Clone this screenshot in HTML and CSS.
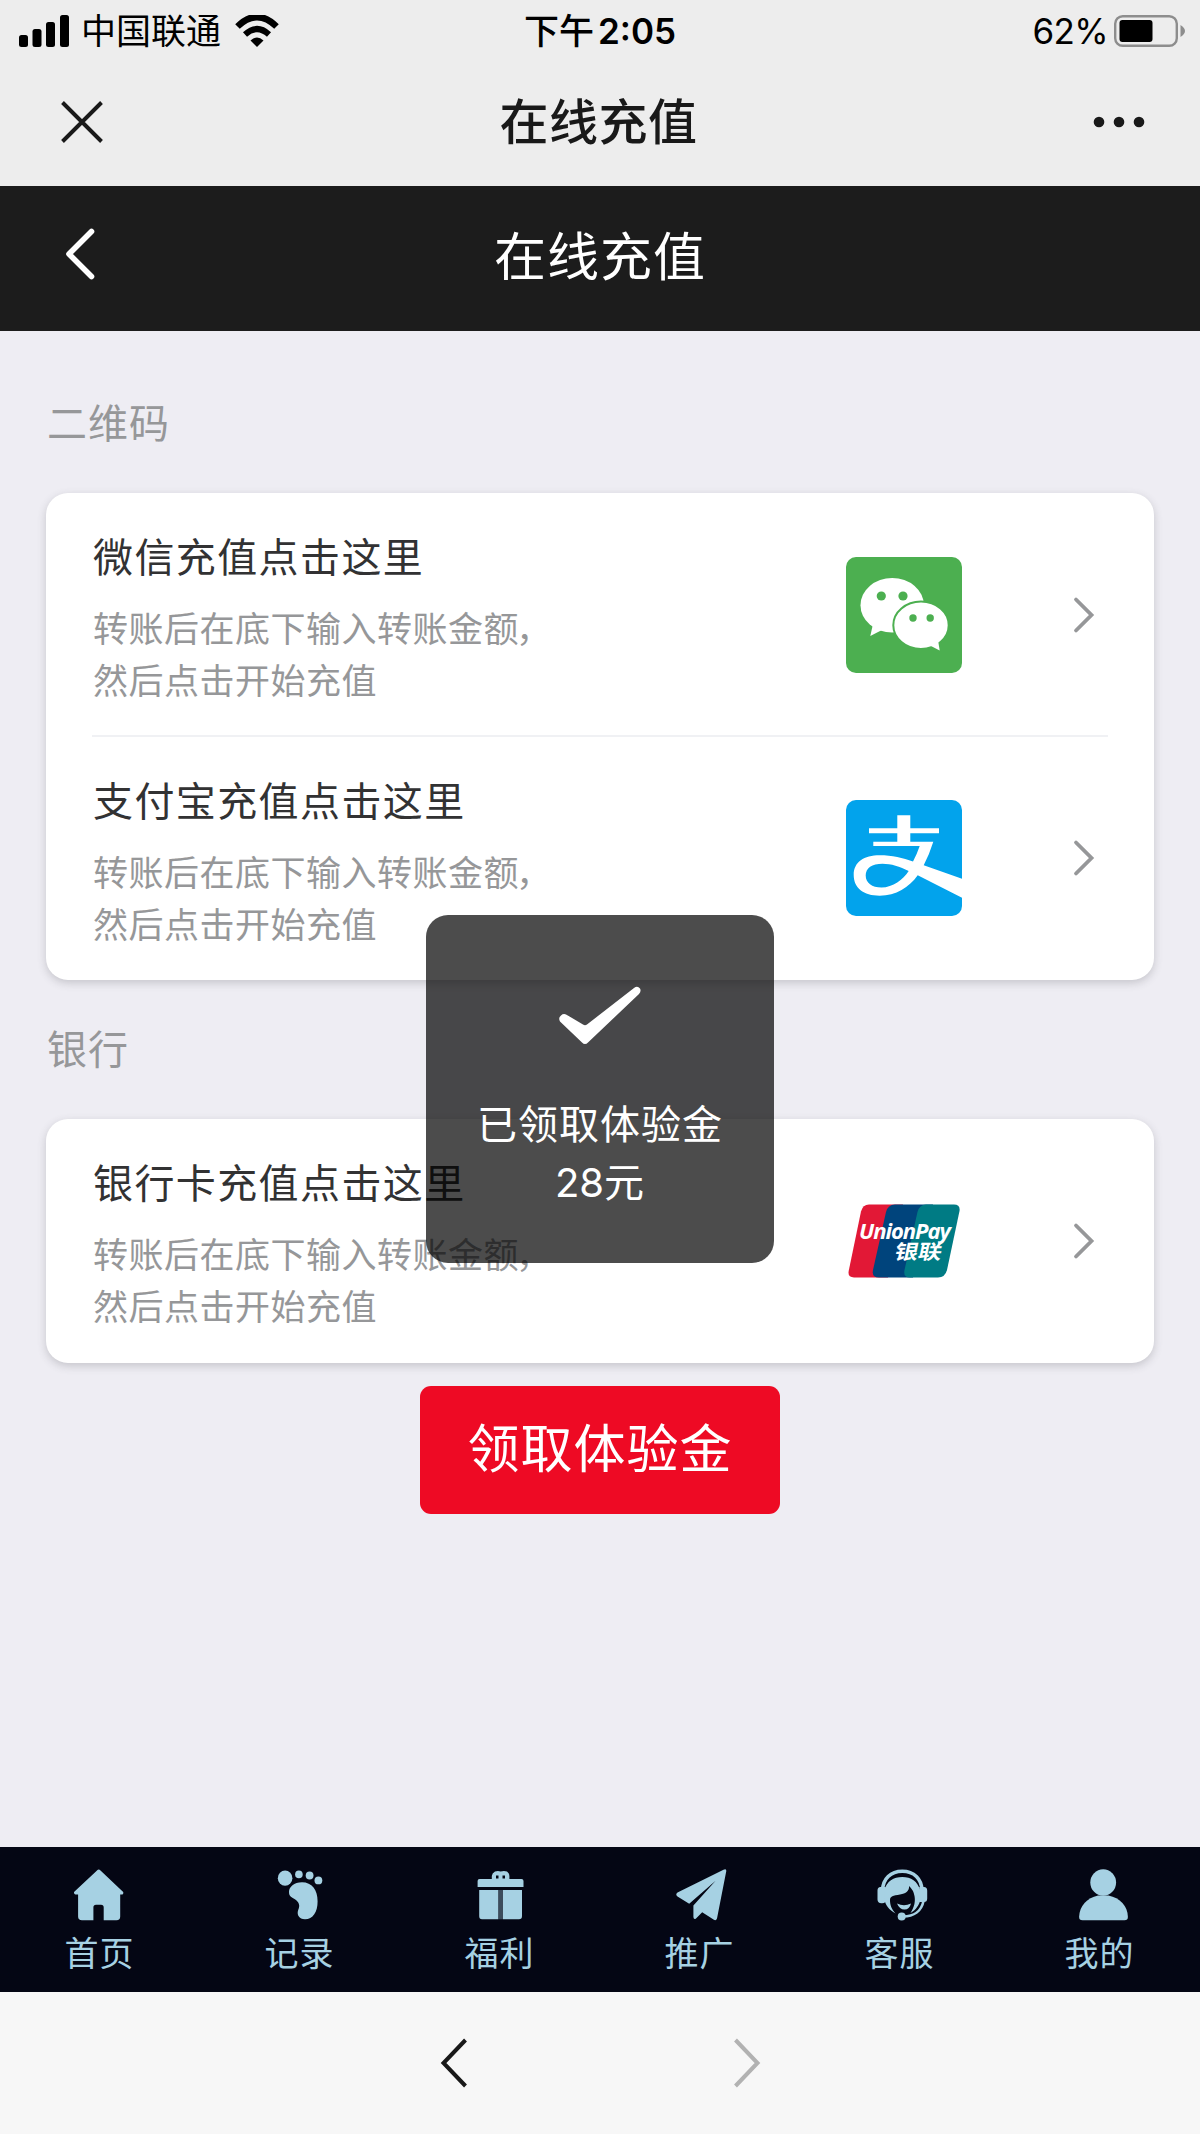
FILE: index.html
```html
<!DOCTYPE html>
<html lang="zh-CN">
<head>
<meta charset="utf-8">
<title>在线充值</title>
<link rel="stylesheet" href="styles.css">
</head>
<body>
<div class="screen">
  <div class="status">
    <div class="status-left">
      <svg class="signal" width="50" height="32" viewBox="0 0 50 32"><rect x="0" y="20" width="9" height="12" rx="2.5"/><rect x="13.5" y="14" width="9" height="18" rx="2.5"/><rect x="27" y="7" width="9" height="25" rx="2.5"/><rect x="41" y="0" width="9" height="32" rx="2.5"/></svg>
      <span class="carrier">中国联通</span>
      <svg class="wifi" width="44" height="32" viewBox="0 0 44 32"><path d="M2.5 11.5Q22-7.5 41.5 11.5" fill="none" stroke="#000" stroke-width="6.5"/><path d="M10 19.5Q22 8.5 34 19.5" fill="none" stroke="#000" stroke-width="6"/><path d="M15.5 25.5Q22 19.5 28.500 25.5L22 32Z"/></svg>
    </div>
    <div class="time">下午<span class="clock">2:05</span></div>
    <div class="status-right">
      <span class="percent">62%</span>
      <svg width="72" height="32" viewBox="0 0 72 32"><rect x="1.200" y="1.200" width="61.600" height="29.600" rx="7.500" fill="none" stroke="#8d8d8d" stroke-width="2.400"/><rect x="5.500" y="5" width="33" height="22" rx="3"/><path d="M66.500 10Q71 13 71 16T66.500 22Z" fill="#8d8d8d"/></svg>
    </div>
  </div>
  <header class="browser-bar">
    <svg class="close" width="44" height="44" viewBox="0 0 44 44"><path d="M2.500 2.500 41.500 41.500M41.500 2.500 2.500 41.500" fill="none" stroke="#191919" stroke-width="3.900"/></svg>
    <h1 class="browser-title">在线充值</h1>
    <svg class="more" width="52" height="12" viewBox="0 0 52 12"><circle cx="6" cy="6" r="5.300"/><circle cx="26" cy="6" r="5.300"/><circle cx="46" cy="6" r="5.300"/></svg>
  </header>
  <nav class="page-bar">
    <svg class="back" width="30" height="52" viewBox="0 0 30 52"><path d="M26.500 3.500 4 26 26.500 48.500" fill="none" stroke="#fff" stroke-width="5.600" stroke-linecap="round" stroke-linejoin="round"/></svg>
    <h2 class="page-title">在线充值</h2>
  </nav>

  <main class="content">
    <h3 class="section">二维码</h3>
    <div class="card">
      <div class="row divided">
        <div class="info"><div class="name">微信充值点击这里</div><div class="desc">转账后在底下输入转账金额<span class="comma">，</span><br>然后点击开始充值</div></div>
        <svg class="logo" width="116" height="116" viewBox="0 0 116 116"><rect width="116" height="116" rx="10" fill="#4caf50"/><ellipse cx="46.200" cy="48.300" rx="31.700" ry="27.300" fill="#fff"/><path d="M27 67 24.300 79 36 73Z" fill="#fff"/><ellipse cx="75" cy="68.300" rx="27.700" ry="23.700" fill="#fff" stroke="#4caf50" stroke-width="2"/><path d="M92 83 93.700 93.500 84 88.500Z" fill="#fff"/><g fill="#4caf50"><circle cx="35.300" cy="39" r="4.600"/><circle cx="57" cy="39" r="4.600"/><circle cx="67" cy="61" r="3.700"/><circle cx="84.200" cy="61" r="3.700"/></g></svg>
        <svg class="arrow" width="22" height="38" viewBox="0 0 22 38"><path d="M3 3.500 18.500 19 3 34.500" fill="none" stroke="#969799" stroke-width="3.800" stroke-linecap="round"/></svg>
      </div>
      <div class="row">
        <div class="info"><div class="name">支付宝充值点击这里</div><div class="desc">转账后在底下输入转账金额<span class="comma">，</span><br>然后点击开始充值</div></div>
        <svg class="logo" width="116" height="116" viewBox="0 0 116 116"><rect width="116" height="116" rx="10" fill="#02a3ec"/><path fill="#fff" fill-rule="evenodd" d="M51.300 15.300H64.300V28.300H93V33.300H64.300V41.700H87.300Q83.500 54 77.700 65.300L116 78.700V97.700L71.700 75.300C63 87.500 50 95.700 33.700 95.700C17.500 95.700 7.700 88 7.700 75C7.700 62 18 55.300 33.700 55.300C46 55.300 57 58 67 61.500Q71 54 73.700 46H27.300V41.700H51.300V33.300H23V28.300H51.300ZM62.700 71C54 66.500 45 63.700 36.500 63.700C26 63.700 19.700 68 19.700 75.500C19.700 83 26 87.500 35.500 87.500C47 87.500 57 79.500 62.700 71Z"/></svg>
        <svg class="arrow" width="22" height="38" viewBox="0 0 22 38"><path d="M3 3.500 18.500 19 3 34.500" fill="none" stroke="#969799" stroke-width="3.800" stroke-linecap="round"/></svg>
      </div>
    </div>
    <h3 class="section">银行</h3>
    <div class="card">
      <div class="row">
        <div class="info"><div class="name">银行卡充值点击这里</div><div class="desc">转账后在底下输入转账金额<span class="comma">，</span><br>然后点击开始充值</div></div>
        <svg class="logo" width="116" height="116" viewBox="-2 -21 116 116"><path fill="#e21836" d="M21 .5H55L40 73.500H6Q-.5 73.500.7 67L13 7.500Q14.800 .5 21 .5Z"/><path fill="#00447c" d="M47 .5H85L65 73.500H31Q23.500 73.500 25 66L38 8Q40 .5 47 .5Z"/><path fill="#007b84" d="M78 .5H106Q112.500 .5 111.500 7L99 66Q97 73.500 90 73.500H62Q55 73.500 56.500 66L69.500 8Q71.500 .5 78 .5Z"/><text class="up-latin" x="11" y="34.500" textLength="92" lengthAdjust="spacing">UnionPay</text><text class="up-han" transform="translate(45.500 55) skewX(-12)" textLength="47" lengthAdjust="spacingAndGlyphs">银联</text></svg>
        <svg class="arrow" width="22" height="38" viewBox="0 0 22 38"><path d="M3 3.500 18.500 19 3 34.500" fill="none" stroke="#969799" stroke-width="3.800" stroke-linecap="round"/></svg>
      </div>
    </div>
    <button class="claim">领取体验金</button>
  </main>

  <footer class="tabs">
    <div class="tab"><svg class="tab-icon" viewBox="0 0 60 60"><path d="M27 5.500Q28.700 3.500 30.500 5.500L53.200 27Q54 30 50.200 29.500V51.500Q50.200 55.300 46.500 55.300H33.700V42.500Q33.700 39.700 31 39.700H26Q23.400 39.700 23.400 42.500V55.300H12Q8.100 55.300 8.100 51.500V29.500Q3.500 30 4 27Z"/></svg><span>首页</span></div>
    <div class="tab"><svg class="tab-icon" viewBox="0 0 60 60"><ellipse cx="15.100" cy="13.200" rx="7.300" ry="7.600"/><circle cx="28.900" cy="9.400" r="3.800"/><circle cx="39.600" cy="10.500" r="3.900"/><circle cx="48.400" cy="15.400" r="3.900"/><path d="M32 17.300C42 17.300 47.600 25 47.600 36.500C47.600 47 43 54.300 35 54.300C29 54.300 26.500 49.500 28.200 45C30 41 29.500 38 26 35C22 32 19 32 19 27C19 22 24 17.300 32 17.300Z"/></svg><span>记录</span></div>
    <div class="tab"><svg class="tab-icon" viewBox="0 0 60 60"><path d="M9.500 14H21.800V11Q22 8 25 6.500Q28 5.500 30.600 6.500Q34 5.500 37 6.500Q39.400 8 39.400 11V14H51.500Q53.500 14 53.500 16V22H7.600V16Q7.600 14 9.500 14ZM26 10.500V13.500H28.500V10.500ZM32.500 10.500V13.500H35V10.500Z" fill-rule="evenodd"/><path d="M9.200 25H28.200V54.300H12Q9.200 54.300 9.200 51Z"/><path d="M33 25H52V51Q52 54.300 49 54.300H33Z"/><path d="M28.200 25H33V54.300H28.200Z" opacity=".35"/></svg><span>福利</span></div>
    <div class="tab"><svg class="tab-icon" viewBox="0 0 60 60"><path d="M56.300 6 47 53.500Q46 56.500 43.500 54.500L32.200 47.300 26 53.500Q23.700 55 23.400 52V40.500L45.600 15.700 19.200 38.700 7.500 31.500Q5 29.500 7.500 27.500L53.500 4.800Q56.500 3.500 56.300 6Z"/></svg><span>推广</span></div>
    <div class="tab"><svg class="tab-icon" viewBox="0 0 60 60"><path d="M12.500 26C12.500 13.500 21 6.300 32.300 6.300S52 13.500 52 26" fill="none" stroke="#a6d1e3" stroke-width="3.600"/><path d="M10.500 22H15.500V37Q14 38.500 11.500 38.300Q7.500 38 7.500 34.500V25.500Q7.500 22 10.500 22ZM49.300 22H54Q57.200 22 57.200 25.500V33.500Q57.200 37 54 37H49.300Z"/><path d="M14 25.500C17 16 23.500 12 32.300 12S47.500 16 50.300 25.500L50.500 35C49 40 46 45 40.500 48C44.500 42 45.500 36 44.500 31Q43.500 25 39 21C39.500 26 36 28.500 30 29.500C23 30.500 20 31.500 20 35C20 40 21.500 44 25.500 48.500C19 45 15.500 40 14.500 35Z"/><path d="M27 38.500Q34 42 41 38.500Q39.500 44.500 34.500 44.500T27 38.500Z"/><path d="M53.500 36C51.500 46 44 51.500 33 51.500" fill="none" stroke="#a6d1e3" stroke-width="2.600"/><circle cx="31.700" cy="51.500" r="4"/></svg><span>客服</span></div>
    <div class="tab"><svg class="tab-icon" viewBox="0 0 60 60"><ellipse cx="33.200" cy="17.500" rx="12.900" ry="13.200"/><path d="M28 30.500H38.500C50 33 57.700 41 57.900 52Q57.900 55.300 54.500 55.300H12.500Q9.100 55.300 9.100 52C9.400 41 17 33 28 30.500Z"/></svg><span>我的</span></div>
  </footer>
  <div class="toolbar">
    <svg width="28" height="52" viewBox="0 0 28 52"><path d="M25.500 3 3.500 26 25.500 49" fill="none" stroke="#191919" stroke-width="4"/></svg>
    <svg width="28" height="52" viewBox="0 0 28 52"><path d="M2.500 3 24.500 26 2.500 49" fill="none" stroke="#b2b2b2" stroke-width="4"/></svg>
  </div>

  <div class="toast">
    <svg width="84" height="60" viewBox="0 0 84 60"><path fill="#fff" d="M2 36.500Q0 33 3 30.500Q5.500 28 8.500 29.700L25 39.500Q27 40.800 29 39.500L76 3Q79.500 .5 82 3.500Q83.500 6 81 9L30 57.500Q27 60.500 24 57.500Z"/></svg>
    <div class="toast-text">已领取体验金<br><span class="amount">28</span>元</div>
  </div>
</div>
</body>
</html>
```
FILE: styles.css
```css
* { box-sizing: border-box; }
body {
  margin: 0;
  font-family: Inter, "Noto Sans CJK SC", sans-serif;
  font-weight: 400;
  color: #323233;
  background: #eeedf3;
}
h1, h2, h3 { margin: 0; font-weight: 400; }
svg { display: block; flex: none; }
.screen {
  position: relative;
  width: 1200px;
  height: 2134px;
  display: flex;
  flex-direction: column;
  overflow: hidden;
}

.status {
  height: 60px;
  padding: 0 14px 0 19px;
  display: grid;
  grid-template-columns: 1fr auto 1fr;
  align-items: center;
  background: #ededed;
  color: #000;
  font-size: 35px;
  line-height: 60px;
}
.status-left, .status-right { display: flex; align-items: center; }
.status-right { justify-content: flex-end; gap: 6px; }
.carrier { margin: 0 14px 0 12px; padding-top: 1px; }
.percent { letter-spacing: -0.600px; }
.time { font-weight: 500; padding-right: 5px; }
.clock { font-weight: 600; margin-left: 4px; }

.browser-bar {
  height: 126px;
  padding: 0 55px 3px 60px;
  display: grid;
  grid-template-columns: 1fr auto 1fr;
  align-items: center;
  background: #ededed;
  color: #191919;
}
.browser-title {
  padding: 2px 8px 0 0;
  font-size: 49px;
  font-weight: 500;
  line-height: 70px;
  letter-spacing: .5px;
}
.more { justify-self: end; fill: #191919; }

.page-bar {
  height: 145px;
  padding: 0 65px 1px;
  display: grid;
  grid-template-columns: 1fr auto 1fr;
  align-items: center;
  background: #1c1c1c;
  color: #fff;
}
.page-bar .back { margin-top: -9px; }
.page-title { font-size: 52px; letter-spacing: 1px; line-height: 80px; }

.content {
  flex: 1;
  padding: 23px 46px 0;
  display: flex;
  flex-direction: column;
}
.section {
  padding-left: 1px;
  font-size: 40px;
  line-height: 139px;
  letter-spacing: 1px;
  color: #969799;
}
.card {
  padding: 0 46px;
  border-radius: 22px;
  background: #fff;
  box-shadow: 0 3px 8px rgba(70, 70, 80, .24);
}
.row {
  height: 243.5px;
  display: flex;
  align-items: center;
}
.divided { box-shadow: inset 0 -2px #f0f1f4; }
.info { width: 754px; height: 100%; padding: 35px 0 0 1px; }
.name { font-size: 40px; line-height: 60px; letter-spacing: 1.400px; }
.desc {
  margin-top: 15px;
  font-size: 35px;
  line-height: 52px;
  letter-spacing: .5px;
  color: #969799;
}
.comma { margin-left: -3px; }
.arrow { margin-left: 111px; }
.up-latin {
  font: italic 700 22px "Open Sans", sans-serif;
  fill: #fff;
}
.up-han { font: 700 20px "Noto Sans CJK SC", sans-serif; fill: #fff; }
.claim {
  align-self: center;
  width: 360px;
  height: 128px;
  margin-top: 23px;
  padding: 0 0 8px;
  border: 0;
  border-radius: 11px;
  background: #ee0a24;
  color: #fff;
  font: 400 52px Inter, "Noto Sans CJK SC", sans-serif;
  letter-spacing: 1px;
}

.tabs {
  height: 145px;
  display: grid;
  grid-template-columns: repeat(6, 1fr);
  background: #040614;
  color: #a6d1e3;
  fill: #a6d1e3;
}
.tab {
  padding-top: 18px;
  display: flex;
  flex-direction: column;
  align-items: center;
  font-size: 34px;
  line-height: 58px;
  letter-spacing: 1px;
}
.tab span { padding-right: 1px; }
.tab-icon { width: 60px; height: 60px; }

.toolbar {
  height: 142px;
  display: flex;
  justify-content: center;
  align-items: center;
  gap: 265px;
  background: #f7f7f7;
}

/* Sits over the cards, centred on the page content */
.toast {
  position: absolute;
  left: 426px;
  top: 915px;
  width: 348px;
  height: 348px;
  padding-top: 70px;
  display: flex;
  flex-direction: column;
  align-items: center;
  border-radius: 22px;
  background: rgba(0, 0, 0, .7);
  color: #fff;
}
.toast-text {
  margin-top: 51px;
  font-size: 40px;
  line-height: 58px;
  letter-spacing: 1px;
  text-align: center;
}
.amount { letter-spacing: 0; }
```
